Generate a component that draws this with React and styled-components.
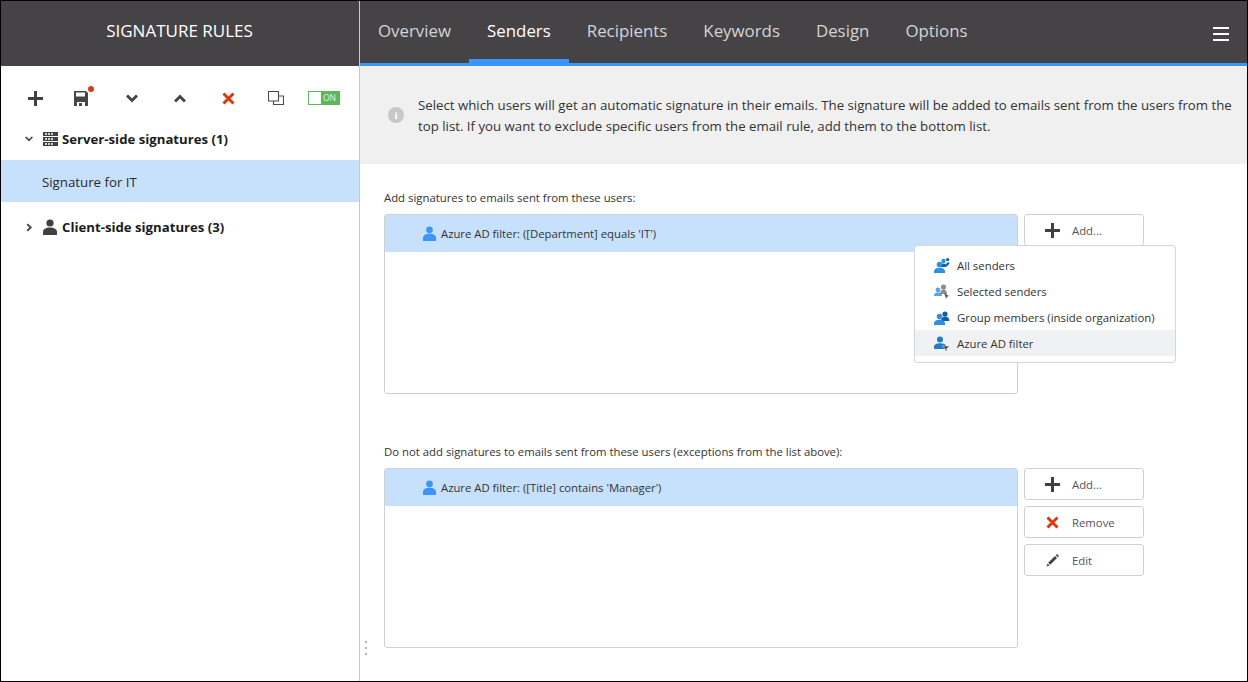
import React from 'react';
import styled, { createGlobalStyle } from 'styled-components';

const Global = createGlobalStyle`
  html, body { margin: 0; padding: 0; background: #fff; }
  * { box-sizing: border-box; }
  body { font-family: "Open Sans", "Noto Sans", "Liberation Sans", sans-serif; color: #333; }
`;

const Frame = styled.div`
  width: 1248px; height: 682px; display: flex; overflow: hidden;
  border: 1px solid #000; background: #fff; position: relative;
`;
const Side = styled.aside`
  width: 359px; flex: none; border-right: 1px solid #c8c8c8; display: flex; flex-direction: column;
`;
const SideHead = styled.header`
  height: 65px; flex: none; background: #464347; color: #fff; display: flex; align-items: center;
  justify-content: center; font-size: 17px; padding: 0 1px 6px 0;
`;
const Toolbar = styled.div`
  display: grid; grid-template-columns: repeat(7, 48px); justify-items: center; align-items: center;
  padding: 12px 0 0 11px; height: 52px;
`;
const ToolIcon = styled.span`
  position: relative; display: flex; width: ${p => p.$w || 16}px; height: 16px; align-items: center;
  justify-content: ${p => p.$start ? 'flex-start' : 'center'};
  margin-right: ${p => p.$mr || 0}px;
`;
const Dot = styled.i`
  position: absolute; right: 0; top: -4px; width: 6px; height: 6px; border-radius: 50%; background: #d83b12;
`;
const Toggle = styled.span`
  width: 32px; height: 14px; background: #5cb85c; display: flex; align-items: center; justify-content: flex-end;
  color: #e0f3e0; font-size: 8.5px; line-height: 14px; padding-right: 4px; position: relative;
`;
const Knob = styled.i`
  position: absolute; left: 1px; top: 1px; width: 12px; height: 12px; background: #fff;
`;
const TreeGroup = styled.div`
  display: flex; align-items: center; height: ${p => p.$h}px; padding-left: 23px;
  font-size: 13.2px; font-weight: 700; color: #1c1c1c;
`;
const Caret = styled.span`
  display: flex; width: 11px; height: 10px; margin-right: 7px; padding-right: 2px; align-items: center; justify-content: center;
`;
const GroupIcon = styled.span`
  display: flex; width: 16px; height: 16px; margin-right: 4px; align-items: center; justify-content: center;
`;
const TreeItem = styled.div`
  height: 42px; display: flex; align-items: center; padding: 2px 0 0 41px; background: #c7e1fc;
  font-size: 13.28px; color: #2a2a2a;
`;
const Main = styled.main`
  flex: 1; min-width: 0; display: flex; flex-direction: column; position: relative;
`;
const TabBar = styled.nav`
  height: 65px; flex: none; background: #464347; border-bottom: 3px solid #3b96fb; display: flex; position: relative;
`;
const Tab = styled.div`
  padding: 0 18px 3px; display: flex; align-items: center; font-size: 16.85px; height: 62px;
  color: ${p => p.$active ? '#fff' : '#d4d4d4'};
  box-shadow: ${p => p.$active ? 'inset 0 -4px 0 #3b96fb' : 'none'};
`;
const Burger = styled.div`
  position: absolute; right: 18px; top: 26px; width: 16px; height: 14px; display: flex; flex-direction: column; justify-content: space-between;
  span { display: block; height: 2px; background: #fff; }
`;
const Info = styled.section`
  height: 98px; flex: none; background: #f0f0f0; display: flex; align-items: center; padding: 2px 0 0 28px;
`;
const InfoDot = styled.span`
  flex: none; width: 16px; height: 16px; border-radius: 50%; background: #c8c8c8; color: #fff; margin: 0 14px 2px 0;
  display: flex; align-items: center; justify-content: center; font-size: 11px; font-weight: 700; font-family: "Liberation Serif", serif;
`;
const InfoText = styled.p`
  margin: 0; font-size: 13.245px; line-height: 21px; color: #333; white-space: nowrap;
`;
const Body = styled.div`
  flex: 1; padding: 26px 0 0 24px;
`;
const Section = styled.section`
  margin-bottom: ${p => p.$mb || 0}px;
`;
const Label = styled.div`
  font-size: 11.35px; line-height: 16px; height: 24px; color: #333;
`;
const Row = styled.div`
  display: flex; gap: 6px; align-items: flex-start;
`;
const ListBox = styled.div`
  width: 634px; height: 180px; border: 1px solid #cfd0d4; border-radius: 3px; background: #fff; overflow: hidden;
`;
const ListRow = styled.div`
  height: 37px; background: #c7e1fc; display: flex; align-items: center; padding-left: 38px;
  font-size: 11.3px; color: #333; gap: 5px;
`;
const Buttons = styled.div`
  display: flex; flex-direction: column; gap: 6px;
`;
const Btn = styled.div`
  width: 120px; height: 32px; border: 1px solid #cfd0d4; border-radius: 3px; display: flex; align-items: center; background: #fff;
  font-size: 11.35px; color: #555;
`;
const BtnIcon = styled.span`
  width: 47px; flex: none; display: flex; justify-content: center; padding-left: 8px;
`;
const Menu = styled.div`
  position: absolute; left: 554px; top: 244px; width: 262px; height: 118px; background: #fff; border: 1px solid #d4d5d9;
  border-radius: 3px; padding-top: 6px; z-index: 2;
`;
const MenuItem = styled.div`
  height: 26px; display: flex; align-items: center; padding-left: 19px; gap: 7px; font-size: 11.37px; color: #333;
  background: ${p => p.$hover ? '#f0f1f3' : 'transparent'};
`;
const Handle = styled.div`
  position: absolute; left: 5px; top: 640px; display: flex; flex-direction: column; gap: 4px;
  i { width: 2px; height: 2px; background: #b4b4b4; display: block; }
`;

const Plus = ({ s = 15, c = '#404040' }) => (
  <svg width={s} height={s} viewBox="0 0 15 15"><path d="M6 0h3v6h6v3H9v6H6V9H0V6h6z" fill={c} /></svg>
);
const Cross = ({ s = 13 }) => (
  <svg width={s} height={s} viewBox="0 0 13 13"><path d="M1.5 1.5l10 10M11.5 1.5l-10 10" stroke="#d83b12" strokeWidth="3" fill="none" /></svg>
);
const Save = () => (
  <svg width="14" height="16" viewBox="0 0 14 16"><path fillRule="evenodd" d="M0 1h12l2 2v13h-3v-4H3v4H0zM2 2.500v4h9v-4z" fill="#464646" /><path d="M5 13h3v3H5z" fill="#464646" /></svg>
);
const Chev = ({ up, s = 12, w = 3, c = '#454545' }) => (
  <svg width={s} height={s * 0.75} viewBox="0 0 12 9"><path d={up ? 'M1 7.5l5-5 5 5' : 'M1 1.5l5 5 5-5'} fill="none" stroke={c} strokeWidth={w} /></svg>
);
const Copy = () => (
  <svg width="16" height="14" viewBox="0 0 16 14" fill="none" stroke="#4a4a4a" strokeWidth="1.1"><path d="M.5.5h10v9.5H.5z" /><path d="M10.5 5h5v8.5H5.500V10" /></svg>
);
const Server = () => (
  <svg width="15" height="14" viewBox="0 0 15 14"><path fillRule="evenodd" fill="#404040" d="M0 0h15v4H0zM0 5h15v4H0zM0 10h15v4H0z" /><path fill="#fff" d="M2 1.200h2v1.600H2zM5 1.200h2v1.600H5zM8 1.200h2v1.600H8zM2 6.200h2v1.600H2zM5 6.200h2v1.600H5zM8 6.200h2v1.600H8zM2 11.200h2v1.600H2zM5 11.200h2v1.600H5zM8 11.200h2v1.600H8z" /></svg>
);
const Person = ({ w = 14, h = 16, c = '#404040' }) => (
  <svg width={w} height={h} viewBox="0 0 14 16"><circle cx="7" cy="4" r="3.6" fill={c} /><path d="M0 16v-3c0-3 3-4.600 7-4.600s7 1.600 7 4.600v3z" fill={c} /></svg>
);
const People = ({ back = '#0f5ea8', front = '#2f8fe0' }) => (
  <svg width="16" height="15" viewBox="0 0 16 15">
    <circle cx="11" cy="4" r="2.6" fill={back} />
    <path d="M7 11c0-3 1.800-4.500 4-4.500s4.400 1.500 4.400 4V11z" fill={back} />
    <circle cx="5.5" cy="6.5" r="2.8" fill={front} />
    <path d="M0 15v-1.500c0-2.600 2.400-3.800 5.500-3.800s5.500 1.200 5.500 3.800V15z" fill={front} />
  </svg>
);
const AllIcon = () => (
  <svg width="16" height="15" viewBox="0 0 16 15">
    <circle cx="13.6" cy="1.6" r="1.6" fill="#0f5ea8" />
    <path d="M11 7l3-3 1.600 1.600-3 3z" fill="#0f5ea8" />
    <circle cx="9.5" cy="3" r="2.2" fill="#2f8fe0" />
    <path d="M7 9c0-2 1-3.600 2.600-3.600S12 7 12.400 9z" fill="#0f5ea8" />
    <circle cx="5.5" cy="6.5" r="2.8" fill="#2f8fe0" />
    <path d="M0 15v-1.500c0-2.600 2.400-3.800 5.500-3.800s5.500 1.200 5.500 3.800V15z" fill="#2f8fe0" />
  </svg>
);
const SelIcon = () => (
  <svg width="16" height="15" viewBox="0 0 16 15">
    <circle cx="9.5" cy="3" r="2.6" fill="#8d8d8d" />
    <path d="M6 10c0-3 1.500-4.500 3.500-4.500S13 7 13 10z" fill="#8d8d8d" />
    <circle cx="4" cy="6" r="2.4" fill="#5aa4e6" />
    <path d="M0 12v-.5C0 9.500 1.800 8.600 4 8.600s4 .9 4 2.900v.5z" fill="#5aa4e6" />
    <path d="M10 9l5 3-2 .7-.8 2z" fill="#555" />
  </svg>
);
const FilterIcon = () => (
  <svg width="16" height="15" viewBox="0 0 16 15">
    <circle cx="6" cy="3.4" r="3" fill="#1e7fc6" />
    <path d="M0 13v-2c0-2.600 2.600-3.800 6-3.800s5 .8 6 2.300V13z" fill="#1e7fc6" />
    <path d="M8.500 10h7l-2.700 2.600V15h-1.600v-2.400z" fill="#444" stroke="#fff" strokeWidth=".5" />
  </svg>
);
const Pencil = () => (
  <svg width="14" height="14" viewBox="0 0 14 14"><path d="M11 1l2 2-1.200 1.200-2-2zM9 3l2 2-6.800 6.800-2-2zM1.600 10.400l2 2L.6 13.400z" fill="#404040" /></svg>
);
const AddBtn = () => (
  <Btn><BtnIcon><Plus /></BtnIcon>Add...</Btn>
);

export default function App() {
  return (
    <Frame>
      <Global />
      <Side>
        <SideHead>SIGNATURE RULES</SideHead>
        <Toolbar>
          <ToolIcon $mr={2}><Plus /></ToolIcon>
          <ToolIcon $w={20} $start><Save /><Dot /></ToolIcon>
          <ToolIcon><Chev /></ToolIcon>
          <ToolIcon><Chev up /></ToolIcon>
          <ToolIcon><Cross /></ToolIcon>
          <ToolIcon><Copy /></ToolIcon>
          <ToolIcon $w={32}><Toggle><Knob />ON</Toggle></ToolIcon>
        </Toolbar>
        <TreeGroup $h={42}>
          <Caret><Chev s={8} w={2.6} /></Caret>
          <GroupIcon><Server /></GroupIcon>
          Server-side signatures (1)
        </TreeGroup>
        <TreeItem>Signature for IT</TreeItem>
        <TreeGroup $h={50}>
          <Caret><svg width="6" height="9" viewBox="0 0 7 10"><path d="M1.500 1l4 4-4 4" fill="none" stroke="#454545" strokeWidth="2.200" /></svg></Caret>
          <GroupIcon><Person /></GroupIcon>
          Client-side signatures (3)
        </TreeGroup>
      </Side>
      <Main>
        <TabBar>
          <Tab>Overview</Tab>
          <Tab $active>Senders</Tab>
          <Tab>Recipients</Tab>
          <Tab>Keywords</Tab>
          <Tab>Design</Tab>
          <Tab>Options</Tab>
          <Burger><span /><span /><span /></Burger>
        </TabBar>
        <Info>
          <InfoDot>i</InfoDot>
          <InfoText>
            Select which users will get an automatic signature in their emails. The signature will be added to emails sent from the users from the<br />
            top list. If you want to exclude specific users from the email rule, add them to the bottom list.
          </InfoText>
        </Info>
        <Body>
          <Section $mb={50}>
            <Label>Add signatures to emails sent from these users:</Label>
            <Row>
              <ListBox>
                <ListRow><Person w={13} h={15} c="#3b96fb" />Azure AD filter: ([Department] equals 'IT')</ListRow>
              </ListBox>
              <Buttons><AddBtn /></Buttons>
            </Row>
          </Section>
          <Section>
            <Label>Do not add signatures to emails sent from these users (exceptions from the list above):</Label>
            <Row>
              <ListBox>
                <ListRow><Person w={13} h={15} c="#3b96fb" />Azure AD filter: ([Title] contains 'Manager')</ListRow>
              </ListBox>
              <Buttons>
                <AddBtn />
                <Btn><BtnIcon><Cross /></BtnIcon>Remove</Btn>
                <Btn><BtnIcon><Pencil /></BtnIcon>Edit</Btn>
              </Buttons>
            </Row>
          </Section>
        </Body>
        <Menu>
          <MenuItem><AllIcon />All senders</MenuItem>
          <MenuItem><SelIcon />Selected senders</MenuItem>
          <MenuItem><People />Group members (inside organization)</MenuItem>
          <MenuItem $hover><FilterIcon />Azure AD filter</MenuItem>
        </Menu>
        <Handle><i /><i /><i /></Handle>
      </Main>
    </Frame>
  );
}
